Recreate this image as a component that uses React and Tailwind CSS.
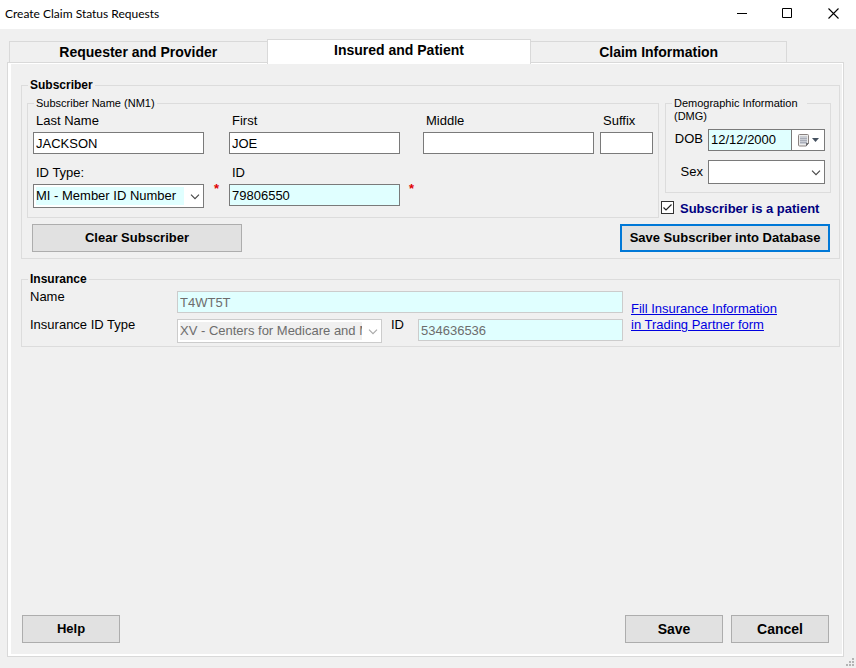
import React from 'react';

const field =
  'block w-full min-w-0 h-[22px] border px-[2px] text-[13px] leading-[20px] outline-none rounded-none';
const active = 'border-[#7a7a7a] text-black';
const locked = 'border-[#cccccc] text-[#6d6d6d] bg-[#e0ffff]';
const pushButton = 'h-7 border border-[#adadad] bg-[#e1e1e1] font-bold';
const group = 'min-w-0 border border-[#dcdcdc]';
const caption = 'block h-[22px] pl-[3px] text-[13px] leading-[21px]';

function TextField({ id, label, value = '', className = 'bg-white' }) {
  return (
    <div>
      <label htmlFor={id} className={caption}>
        {label}
      </label>
      <input id={id} type="text" defaultValue={value} className={`${field} ${active} ${className}`} />
    </div>
  );
}

function Combo({ id, options, className, disabled }) {
  return (
    <div className="relative h-6 bg-white">
      <select
        id={id}
        disabled={disabled}
        className={`block h-full w-full appearance-none rounded-none border bg-clip-content py-[2px] pr-[19px] pl-[2px] text-[13px] leading-[18px] opacity-100 outline-none ${className}`}
      >
        {options.map((o) => (
          <option key={o}>{o}</option>
        ))}
      </select>
      <svg
        className={`pointer-events-none absolute top-[10px] right-1 ${disabled ? 'text-[#a8a8a8]' : 'text-[#444444]'}`}
        width="10"
        height="6"
        viewBox="0 0 10 6"
        fill="none"
        stroke="currentColor"
      >
        <path d="M1 0.7L5 4.7L9 0.7" strokeWidth="1.1" />
      </svg>
    </div>
  );
}

function Required() {
  return (
    <div className="pt-[17px] text-center text-[13px] leading-[20px] font-bold text-[#e00000]">*</div>
  );
}

function TitleBar() {
  return (
    <header className="flex h-[29px] items-start justify-between bg-white pl-[5px]">
      <h1 className="font-[Lato,'Open_Sans',sans-serif] text-[12px] leading-[28px]">
        Create Claim Status Requests
      </h1>
      <div className="flex">
        <button type="button" aria-label="Minimize" className="flex h-[27px] w-[44px] items-center justify-center">
          <svg width="11" height="11" viewBox="0 0 11 11" stroke="black">
            <path d="M0 5.5H10" />
          </svg>
        </button>
        <button type="button" aria-label="Maximize" className="flex h-[27px] w-[46px] items-center justify-center">
          <svg width="11" height="11" viewBox="0 0 11 11" stroke="black" fill="none">
            <path d="M0.5 0.5H9.5V9.5H0.5Z" />
          </svg>
        </button>
        <button type="button" aria-label="Close" className="flex h-[27px] w-[46px] items-center justify-center">
          <svg width="11" height="11" viewBox="0 0 11 11" stroke="black">
            <path d="M0.5 0.5L10.5 10.5M10.5 0.5L0.5 10.5" strokeWidth="1.1" />
          </svg>
        </button>
      </div>
    </header>
  );
}

function Tabs() {
  return (
    <div role="tablist" className="mr-[69px] ml-[9px] flex items-end pt-[10px] text-[14px] font-bold">
      <button type="button" role="tab" aria-selected="false" className="h-[21px] flex-[258] border-t border-l border-[#d9d9d9] leading-[20px]">
        Requester and Provider
      </button>
      <button type="button" role="tab" aria-selected="true" className="relative -mb-[2px] h-[25px] flex-[264] border border-b-0 border-[#d9d9d9] bg-white pb-[4px] leading-[20px]">
        Insured and Patient
      </button>
      <button type="button" role="tab" aria-selected="false" className="h-[21px] flex-[256] border-t border-r border-[#d9d9d9] leading-[20px]">
        Claim Information
      </button>
    </div>
  );
}

function SubscriberName() {
  return (
    <fieldset className={`${group} flex-1 px-[5px] pb-[9px]`}>
      <legend className="ml-[1px] h-4 px-[2px] text-[11px] leading-4">Subscriber Name (NM1)</legend>
      <div className="-mt-[1px] grid grid-cols-[171fr_25px_171fr_23px_171fr_6px_53fr] gap-y-2">
        <TextField id="last" label="Last Name" value="JACKSON" />
        <span />
        <TextField id="first" label="First" value="JOE" />
        <span />
        <TextField id="middle" label="Middle" />
        <span />
        <TextField id="suffix" label="Suffix" />
        <div>
          <label htmlFor="idtype" className={caption}>
            ID Type:
          </label>
          <Combo id="idtype" options={['MI - Member ID Number']} className="border-[#7a7a7a] bg-[#e0ffff] text-black" />
        </div>
        <Required />
        <TextField id="memberid" label="ID" value="79806550" className="bg-[#e0ffff]" />
        <Required />
      </div>
    </fieldset>
  );
}

function Demographics() {
  return (
    <fieldset className={`${group} w-full pr-[5px] pb-2`}>
      <legend className="ml-[6px] h-4 w-[135px] px-[2px] pt-[2px] text-[11px] leading-[13px]">
        Demographic Information (DMG)
      </legend>
      <div className="grid grid-cols-[37px_1fr] gap-x-[5px] gap-y-[9px] pt-[18px]">
        <label htmlFor="dob" className="text-right text-[13px] leading-[20px]">DOB</label>
        <div className="flex h-[22px] border border-[#7a7a7a] bg-white">
          <input id="dob" type="text" defaultValue="12/12/2000" className="w-0 flex-1 bg-[#e0ffff] px-[2px] text-[13px] leading-[20px] outline-none" />
          <button type="button" aria-label="Open calendar" className="flex w-[33px] items-center justify-center gap-[2px] border-l border-[#7a7a7a]">
            <svg width="12" height="13" viewBox="0 0 12 13">
              <path d="M1.5 0.5H9.5Q10.5 0.5 10.5 1.5V9.5L8 12H1.5Q0.5 12 0.5 11V1.5Q0.5 0.5 1.5 0.5Z" fill="#ececec" stroke="#8a8280" />
              <path d="M2 2.5H9V9H8V10H2Z" fill="#a9adb8" />
              <path d="M2.5 3.5H9M2.5 5.5H9M2.5 7.5H9M2.5 9.5H7.5" stroke="#e8eaf0" strokeWidth="1" strokeDasharray="1 1" />
              <path d="M11 9H8V12.5Z" fill="#6c6c70" />
            </svg>
            <svg width="7" height="4" viewBox="0 0 7 4">
              <path d="M0 0H7L3.5 4Z" fill="#44505f" />
            </svg>
          </button>
        </div>
        <label htmlFor="sex" className="text-right text-[13px] leading-[24px]">Sex</label>
        <Combo id="sex" options={['', 'F', 'M']} className="border-[#7a7a7a] bg-white text-black" />
      </div>
    </fieldset>
  );
}

function Subscriber() {
  return (
    <fieldset className={`${group} pt-[2px] pr-2 pb-[6px] pl-[5px]`}>
      <legend className="ml-[1px] h-4 px-[2px] text-[12px] leading-4 font-bold">Subscriber</legend>
      <div className="flex gap-[6px]">
        <SubscriberName />
        <div className="flex w-[166px] flex-col items-end">
          <Demographics />
          <label className="mt-[7px] flex w-[170px] items-start gap-[6px] text-[13px] leading-[18px] font-bold whitespace-nowrap text-[#000080]">
            <span className="relative mt-[1px] flex">
              <input type="checkbox" defaultChecked className="peer h-[13px] w-[13px] appearance-none border border-[#333333] bg-white" />
              <svg className="pointer-events-none absolute inset-0 hidden peer-checked:block" width="13" height="13" viewBox="0 0 13 13" fill="none" stroke="#222222">
                <path d="M2.5 6.5L5 9L10.5 3.5" strokeWidth="1.2" />
              </svg>
            </span>
            Subscriber is a patient
          </label>
        </div>
      </div>
      <div className="mt-[6px] mr-[1px] ml-[5px] flex justify-between text-[13px]">
        <button type="button" className={`${pushButton} w-[210px]`}>Clear Subscriber</button>
        <button type="button" className="h-7 w-[210px] border-2 border-[#0078d7] bg-[#e1e1e1] font-bold whitespace-nowrap">
          Save Subscriber into Database
        </button>
      </div>
    </fieldset>
  );
}

function Insurance() {
  return (
    <fieldset className={`${group} mt-3 pb-[3px] pl-2`}>
      <legend className="-ml-[2px] h-4 px-[2px] text-[12px] leading-4 font-bold">Insurance</legend>
      <div className="grid grid-cols-[147px_1fr_216px] text-[13px]">
        <div className="flex flex-col gap-2 leading-[20px]">
          <label htmlFor="insname">Name</label>
          <label htmlFor="instype">Insurance ID Type</label>
        </div>
        <div className="flex flex-col gap-[6px] pt-1">
          <input id="insname" type="text" disabled defaultValue="T4WT5T" className={`${field} ${locked}`} />
          <div className="grid grid-cols-[1fr_36px_1fr]">
            <Combo
              id="instype"
              disabled
              options={['XV - Centers for Medicare and Medicaid Services PlanID']}
              className="border-[#cccccc] bg-[#f0f0f0] text-[#6d6d6d]"
            />
            <label htmlFor="insid" className="pl-[9px] leading-[12px]">ID</label>
            <input id="insid" type="text" disabled defaultValue="534636536" className={`${field} ${locked}`} />
          </div>
        </div>
        <p className="pt-[14px] pl-2 leading-4">
          <a href="#trading-partner" className="text-[#0000e0] underline">
            Fill Insurance Information<br />in Trading Partner form
          </a>
        </p>
      </div>
    </fieldset>
  );
}

export default function App() {
  return (
    <div className="flex min-h-screen flex-col bg-[#f0f0f0] font-['Liberation_Sans',Arial,sans-serif] text-black">
      <TitleBar />
      <form className="flex flex-1 flex-col" onSubmit={(e) => e.preventDefault()}>
        <Tabs />
        <main className="mr-3 ml-[7px] flex flex-1 flex-col border border-[#d9d9d9]">
          <div className="flex flex-1 flex-col border-t border-r border-b-2 border-l-[3px] border-white pt-[13px] pr-[2px] pb-[11px] pl-[10px]">
            <Subscriber />
            <Insurance />
            <div className="mt-auto mr-[11px] ml-[1px] flex gap-2 text-[14px]">
              <button type="button" className={`${pushButton} mr-auto w-[98px] text-[13px]`}>Help</button>
              <button type="submit" className={`${pushButton} w-[98px]`}>Save</button>
              <button type="button" className={`${pushButton} w-[98px]`}>Cancel</button>
            </div>
          </div>
        </main>
      </form>
      <footer className="flex h-[11px] justify-end pr-[1px]">
        <svg width="10" height="10" viewBox="0 0 10 10" fill="#b4b4b4">
          <path d="M7 1h2v2h-2zM4 4h2v2h-2zM7 4h2v2h-2zM1 7h2v2h-2zM4 7h2v2h-2zM7 7h2v2h-2z" />
        </svg>
      </footer>
    </div>
  );
}
